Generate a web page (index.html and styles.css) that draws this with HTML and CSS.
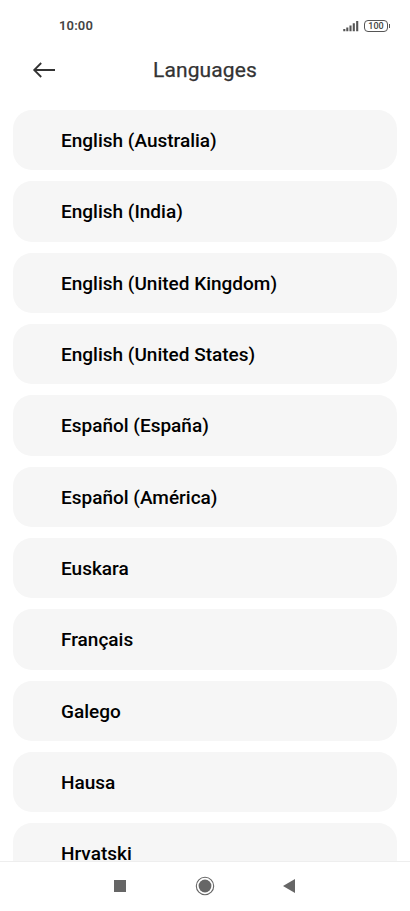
FILE: index.html
```html
<!DOCTYPE html>
<html lang="en">
<head>
  <meta charset="UTF-8" />
  <meta name="viewport" content="width=device-width, initial-scale=1.0"/>
  <title>Languages</title>
  <link rel="stylesheet" href="styles.css">
</head>
<body>

  <div class="statusbar">
    <span class="time">10:00</span>
    <div class="status-icons">
      <svg class="signal" width="16" height="12" viewBox="0 0 16 12">
        <path d="M1.3 9v2.3M4.3 7.5v3.8M7.5 5.5v5.8M10.8 3.2v8.1M14.2 1v10.3" stroke="#555" stroke-width="2.1"/>
      </svg>
      <div class="battery">100</div>
    </div>
  </div>

  <header>
    <svg class="back" width="24" height="18" viewBox="0 0 24 18">
      <path d="M23 9H2.5M9.2 2L2.2 9l7 7" fill="none" stroke="#333" stroke-width="1.8"/>
    </svg>
    <h1>Languages</h1>
  </header>

  <ul class="languages">
    <li>English (Australia)</li>
    <li>English (India)</li>
    <li>English (United Kingdom)</li>
    <li>English (United States)</li>
    <li>Español (España)</li>
    <li>Español (América)</li>
    <li>Euskara</li>
    <li>Français</li>
    <li>Galego</li>
    <li>Hausa</li>
    <li>Hrvatski</li>
  </ul>

  <nav class="navbar">
    <svg width="20" height="20" viewBox="0 0 20 20"><rect x="4" y="4" width="12" height="12" fill="#666"/></svg>
    <svg width="20" height="20" viewBox="0 0 20 20">
      <circle cx="10" cy="10" r="8.7" fill="none" stroke="#666" stroke-width="1.1"/>
      <circle cx="10" cy="10" r="6.4" fill="#666"/>
    </svg>
    <svg width="20" height="20" viewBox="0 0 20 20"><path d="M16 3v14L4 10z" fill="#666"/></svg>
  </nav>

</body>
</html>
```

FILE: styles.css
```css
* { box-sizing: border-box; margin: 0; padding: 0; }

body {
  font-family: Roboto, sans-serif;
  background: #fff;
  color: #000;
  height: 911px;
  display: flex;
  flex-direction: column;
  overflow: hidden;
}

.statusbar {
  flex: none;
  height: 51px;
  padding: 0 22px 0 59px;
  display: flex;
  align-items: center;
  justify-content: space-between;
}

.time {
  font-size: 13px;
  font-weight: 600;
  letter-spacing: 0.15px;
  color: #444;
}

.status-icons {
  display: flex;
  align-items: center;
  gap: 5px;
}

.battery {
  position: relative;
  width: 24px;
  height: 12px;
  border: 1px solid #555;
  border-radius: 4px;
  font-size: 9px;
  font-weight: 500;
  line-height: 10px;
  text-align: center;
  color: #444;
}

.battery::after {
  content: "";
  position: absolute;
  right: -3px;
  top: 3px;
  width: 1.5px;
  height: 4px;
  background: #555;
}

header {
  flex: none;
  height: 59px;
  padding: 0 32px 22px;
  display: grid;
  grid-template-columns: 24px 1fr 24px;
  align-items: center;
}

h1 {
  font-size: 21px;
  font-weight: 400;
  letter-spacing: 0.1px;
  text-align: center;
  color: #333;
  -webkit-text-stroke: 0.25px #333;
}

.languages {
  flex: 1;
  min-height: 0;
  overflow: hidden;
  padding: 0 12.6px 0 13.2px;
  list-style: none;
}

.languages li {
  height: 60.3px;
  margin-bottom: 11.05px;
  padding-left: 47.8px;
  border-radius: 19px;
  background: #f6f6f6;
  font-size: 19px;
  font-weight: 500;
  line-height: 62.4px;
}

.navbar {
  flex: none;
  height: 50px;
  padding: 0 1px 1px 0;
  border-top: 1px solid #eee;
  display: flex;
  align-items: center;
  justify-content: center;
  gap: 64.5px;
}
```
